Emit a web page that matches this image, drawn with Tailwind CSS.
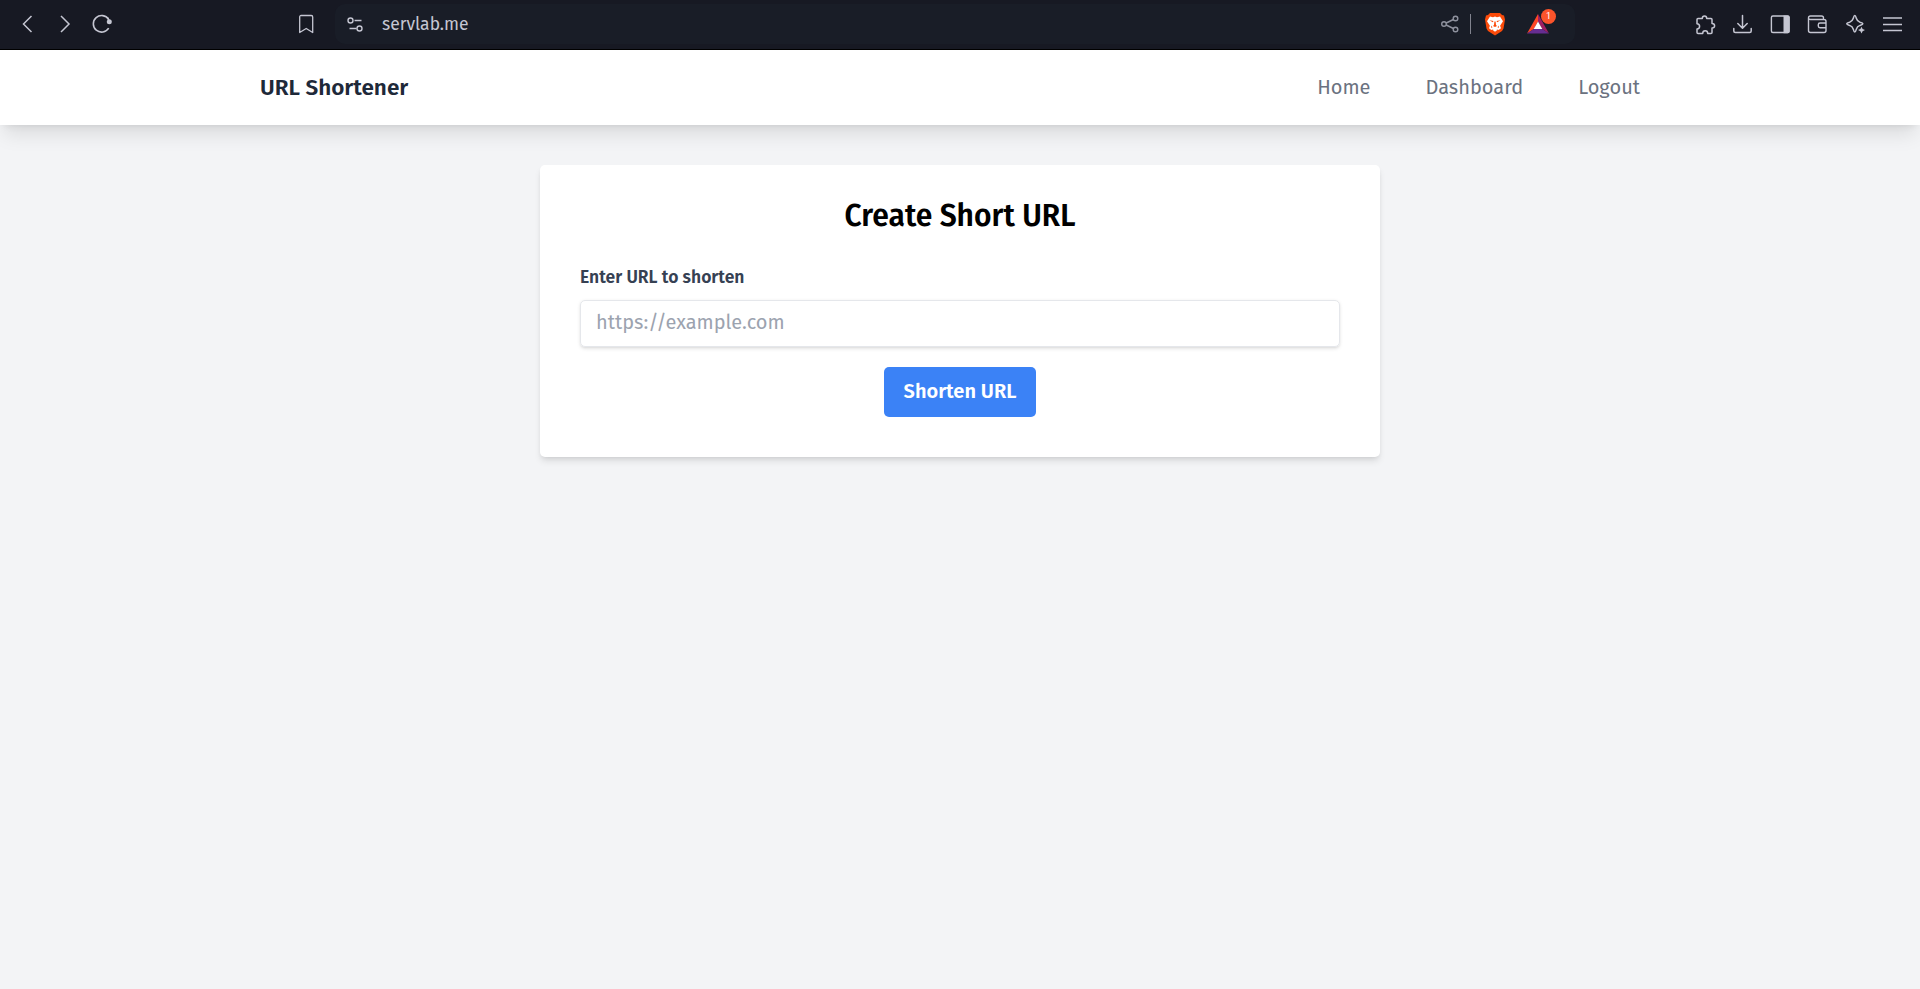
<!DOCTYPE html>
<html lang="en">
<head>
<meta charset="utf-8">
<title>URL Shortener</title>
<script src="https://cdn.jsdelivr.net/npm/@tailwindcss/browser@4"></script>
</head>
<body class="flex h-screen flex-col overflow-hidden bg-gray-100 font-['Fira_Sans','Noto_Sans',sans-serif]">
<!-- Browser toolbar -->
<div class="flex h-[50px] shrink-0 items-start border-b border-black bg-[#171923] text-[#c5c6d2]">
  <div class="flex h-12 items-center gap-[13.5px] pl-[15px]">
    <svg class="size-6" viewBox="0 0 24 24" fill="none" stroke="currentColor" stroke-width="1.5"><path d="M16.5 4 8.5 12l8 8"/></svg>
    <svg class="size-6" viewBox="0 0 24 24" fill="none" stroke="currentColor" stroke-width="1.5"><path d="m8 4 8 8-8 8"/></svg>
    <svg class="size-6" viewBox="0 0 24 24" fill="none" stroke="currentColor" stroke-width="1.6"><path d="M18.7 16.2A8.3 8.3 0 1 1 18.6 7.3"/><circle cx="19.3" cy="9.8" r="2.5" fill="currentColor" stroke="none"/><path d="m17.5 5.5 2 4"/></svg>
  </div>
  <div class="ml-[180px] flex h-12 items-center pr-[17px]">
    <svg class="size-6" viewBox="0 0 24 24" fill="none" stroke="currentColor" stroke-width="1.3" stroke-linejoin="round"><path d="M6.700 3.500h10.500a1.500 1.500 0 0 1 1.500 1.500V20.500l-6.500-4-6.500 4V5Q5.700 3.500 7.200 3.500"/></svg>
  </div>
  <div class="mt-1 flex h-10 w-[1240px] items-center rounded-[10px] bg-[#191d27]">
    <svg class="ml-[8px] size-6" viewBox="0 0 24 24" fill="none" stroke="currentColor" stroke-width="1.4"><circle cx="7.500" cy="8.500" r="2.500"/><path d="M11.500 8.500h7M6.500 16.500h7"/><circle cx="16.500" cy="16.500" r="2.500"/></svg>
    <span class="ml-[15px] pt-[2px] text-[17.5px] leading-[38px]">servlab.me</span>
    <svg class="ml-auto size-6 text-[#8f929e]" viewBox="0 0 24 24" fill="none" stroke="currentColor" stroke-width="1.4"><circle cx="6" cy="12" r="2.300"/><circle cx="17.500" cy="6.500" r="2.300"/><circle cx="17.500" cy="17.500" r="2.300"/><path d="m8.200 11 7.200-3.500M8.200 13l7.200 3.500"/></svg>
    <div class="ml-[8px] h-5 w-px bg-[#81838e]"></div>
    <svg class="ml-[12px] size-6" viewBox="0 0 24 24"><path fill="#fb4b0a" d="M7 1h10l2 2 2 .5 1 4-1.500 9-1.500 2.500-7 4.500-7-4.500L3.500 16.500 2 7.500l1-4L5 3z"/><path fill="#fff" d="m7 4.500 3 .7 2-.6 2 .6 3-.7 3 4.800-2.900 4.500.9 2.500-2.400 1.700-1.600-.5-2 1.500-2-1.500-1.600.5L6 16.300l.9-2.500L4 9.300z"/><path fill="#fb4b0a" d="m6.500 8.300 4 .8-.7 1.200zm11 0-4 .8.700 1.200zM11.400 9.500h1.200l.4 3.500 1 1-2 1.100-2-1.100 1-1zM8.200 13.500l1.300 1.700-1.300.8zm7.600 0-1.300 1.700 1.300.8z"/><path fill="#fff" d="m9.700 18 2.300-1.400 2.300 1.400-2.300 1.800z"/></svg>
    <div class="relative mr-[25px] ml-[19px] h-6 w-6">
      <svg class="size-6" viewBox="0 0 24 24"><path fill="#ff4724" d="M12 2v7.500L7.800 17 1 21.500z"/><path fill="#9e1f63" d="M12 2v7.500l4.200 7.500L23 21.500z"/><path fill="#662d91" d="M1 21.500 7.800 17h8.400l6.800 4.500z"/><path fill="#fff" d="m12 9.500 4.300 7.500H7.700z"/></svg>
      <span class="absolute -top-[3px] left-[15px] flex size-[15px] items-center justify-center rounded-full bg-[#fb542b] font-['Roboto',sans-serif] text-[9px] text-white">1</span>
    </div>
  </div>
  <div class="ml-auto flex h-12 items-center gap-[13.500px] pr-[15px]">
    <svg class="size-6" viewBox="0 0 24 24" fill="none" stroke="currentColor" stroke-width="1.5" stroke-linejoin="round"><path d="M4 6.500h4.300c0-1.600.8-2.500 2.200-2.500s2.200.9 2.200 2.500H17q1 0 1 1v3.900c1.700 0 2.600.9 2.600 2.300s-.9 2.300-2.600 2.300v4.400q0 1-1 1h-3.300c0-1.700-.9-2.600-2.500-2.600s-2.500.9-2.500 2.600H4q-1 0-1-1V17c1.700-.1 2.600-1 2.600-2.700s-.9-2.500-2.600-2.600V7.500q0-1 1-1z"/></svg>
    <svg class="size-6" viewBox="0 0 24 24" fill="none" stroke="currentColor" stroke-width="1.500" stroke-linecap="round" stroke-linejoin="round"><path d="M11.500 3.500V16m-4.700-4.500 4.700 4.700 4.700-4.700M2.800 16.500V19q0 1.500 1.500 1.500h14.400q1.500 0 1.500-1.500v-2.500"/></svg>
    <svg class="size-6" viewBox="0 0 24 24"><rect x="2.400" y="4" width="17.600" height="16.500" rx="1.500" fill="none" stroke="currentColor" stroke-width="1.400"/><path fill="currentColor" d="M14.500 3.500H19q1.700 0 1.700 1.700v14.300q0 1.700-1.700 1.700h-4.500z"/></svg>
    <svg class="size-6" viewBox="0 0 24 24" fill="none" stroke="currentColor" stroke-width="1.400" stroke-linejoin="round"><path d="M17.500 7.500V6q0-2-2-2H4.500Q2.500 4 2.500 6v12.500q0 2 2 2h13.500q2 0 2-2v-9q0-2-2-2H4.500q-2 0-2-1.700M20 11h-6q-1.700 0-1.700 1.700V14q0 1.700 1.700 1.700h6"/></svg>
    <svg class="size-6" viewBox="0 0 24 24" fill="none" stroke="currentColor" stroke-width="1.500" stroke-linejoin="round"><path d="M10.800 3.500c.7 0 1 1 1.500 2.800.7 2.500 1.300 3.200 3.700 3.900 1.900.5 2.900.8 2.900 1.600s-1 1.100-2.900 1.600c-2.400.7-3 1.400-3.700 3.900-.5 1.800-.8 2.800-1.500 2.800s-1-1-1.500-2.800c-.7-2.500-1.300-3.200-3.700-3.900-1.900-.5-2.900-.8-2.900-1.600s1-1.100 2.900-1.600c2.400-.7 3-1.400 3.700-3.900.5-1.800.8-2.800 1.500-2.800z"/><path fill="currentColor" stroke="none" d="m17.500 14.700 1.100 2.300 2.400 1.100-2.400 1.100-1.100 2.300-1.100-2.300-2.400-1.100 2.400-1.100z"/></svg>
    <svg class="size-6" viewBox="0 0 24 24" fill="none" stroke="currentColor" stroke-width="1.500"><path d="M2 6h19M2 12.500h19M2 18.500h19"/></svg>
  </div>
</div>
<!-- Site navigation -->
<nav class="flex h-[75px] shrink-0 items-center justify-between bg-white px-[260px] shadow-[0_12.5px_18.75px_-3.75px_rgba(0,0,0,0.1),0_5px_7.5px_-5px_rgba(0,0,0,0.1)]">
  <a class="text-[22.5px] leading-8 font-semibold whitespace-nowrap text-gray-800">URL Shortener</a>
  <div class="flex gap-[55px] pr-[20px] pb-[2px] text-[20px] leading-[30px] text-[#6b7280]">
    <a>Home</a>
    <a>Dashboard</a>
    <a>Logout</a>
  </div>
</nav>
<!-- Shorten form -->
<main class="mx-auto mt-10 h-[292px] w-[840px] rounded-[5px] bg-white px-10 pt-[31px] shadow-[0_5px_7.5px_-1.25px_rgba(0,0,0,0.1),0_2.5px_5px_-2.5px_rgba(0,0,0,0.1)]">
  <h2 class="text-center text-[30px] leading-10 font-semibold text-black">Create Short URL</h2>
  <form class="flex flex-col">
    <label class="mt-[29px] text-[17.5px] leading-[25px] font-semibold text-gray-700">Enter URL to shorten</label>
    <input class="mt-[10px] h-[47px] rounded-[5px] border border-gray-200 px-[15px] pb-[4px] text-[20px] shadow-[0_1.25px_3.75px_0_rgba(0,0,0,0.1),0_1.25px_2.5px_-1.25px_rgba(0,0,0,0.1)] placeholder:text-[#9ca3af]" placeholder="https://example.com">
    <button type="button" class="mt-5 flex h-[50px] w-[152px] items-center justify-center self-center rounded-[5px] bg-[#3b82f6] pb-[3px] text-[20px] font-semibold whitespace-nowrap text-white">Shorten URL</button>
  </form>
</main>
</body>
</html>
